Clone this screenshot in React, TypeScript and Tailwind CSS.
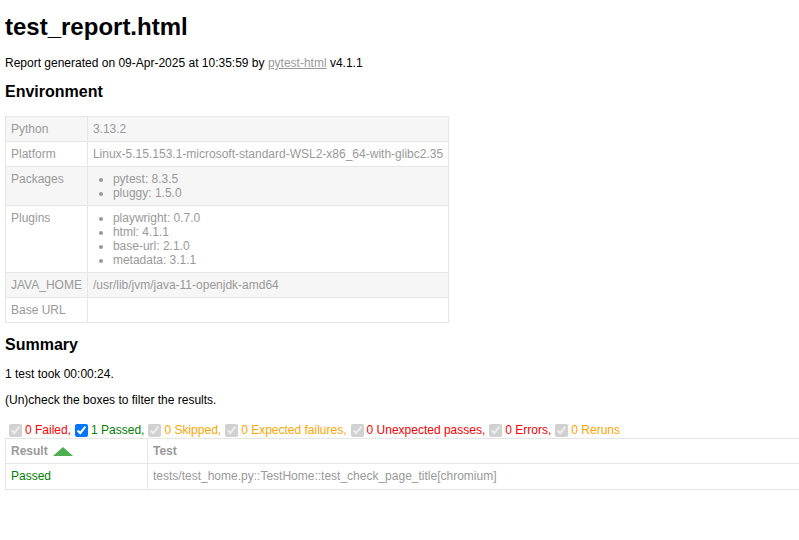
import React from 'react'

const envRows: { key: string; value: string | string[] }[] = [
  { key: 'Python', value: '3.13.2' },
  { key: 'Platform', value: 'Linux-5.15.153.1-microsoft-standard-WSL2-x86_64-with-glibc2.35' },
  { key: 'Packages', value: ['pytest: 8.3.5', 'pluggy: 1.5.0'] },
  { key: 'Plugins', value: ['playwright: 0.7.0', 'html: 4.1.1', 'base-url: 2.1.0', 'metadata: 3.1.1'] },
  { key: 'JAVA_HOME', value: '/usr/lib/jvm/java-11-openjdk-amd64' },
  { key: 'Base URL', value: '' },
]

const filters: { label: string; color: string; checked: boolean; disabled: boolean }[] = [
  { label: '0 Failed', color: 'text-[#ff0000]', checked: true, disabled: true },
  { label: '1 Passed', color: 'text-[#008000]', checked: true, disabled: false },
  { label: '0 Skipped', color: 'text-[#ffa500]', checked: true, disabled: true },
  { label: '0 Expected failures', color: 'text-[#ffa500]', checked: true, disabled: true },
  { label: '0 Unexpected passes', color: 'text-[#ff0000]', checked: true, disabled: true },
  { label: '0 Errors', color: 'text-[#ff0000]', checked: true, disabled: true },
  { label: '0 Reruns', color: 'text-[#ffa500]', checked: true, disabled: true },
]

export default function App() {
  return (
    <div className="w-[799px] h-[540px] overflow-hidden bg-white px-[5px] font-['Liberation_Sans',Arial,sans-serif] text-[12px] text-[#999]">
      <h1 className="mt-[13px] text-[24px] leading-[28px] font-bold text-black">test_report.html</h1>
      <p className="mt-[15px] leading-[14px] text-black">
        Report generated on 09-Apr-2025 at 10:35:59 by{' '}
        <a href="#" className="text-[#999] underline">pytest-html</a> v4.1.1
      </p>

      <h2 className="mt-[13px] text-[16px] leading-[18px] font-bold text-black">Environment</h2>
      <table className="mt-[15px] border-collapse">
        <tbody>
          {envRows.map((row, i) => (
            <tr key={row.key} className={i % 2 === 0 ? 'bg-[#f6f6f6]' : ''}>
              <td className="border border-[#e6e6e6] p-[5px] align-top leading-[14px]">{row.key}</td>
              <td className="border border-[#e6e6e6] p-[5px] align-top leading-[14px]">
                {Array.isArray(row.value) ? (
                  <ul className="list-disc px-[20px]">
                    {row.value.map((v) => (
                      <li key={v}>{v}</li>
                    ))}
                  </ul>
                ) : (
                  row.value
                )}
              </td>
            </tr>
          ))}
        </tbody>
      </table>

      <h2 className="mt-[13px] text-[16px] leading-[18px] font-bold text-black">Summary</h2>
      <p className="mt-[13px] leading-[14px] text-black">1 test took 00:00:24.</p>
      <p className="mt-[12px] leading-[14px] text-black">(Un)check the boxes to filter the results.</p>

      <div className="mt-[15px] flex h-[16px] items-center whitespace-nowrap">
        {filters.map((f, i) => (
          <React.Fragment key={f.label}>
            <input
              type="checkbox"
              defaultChecked={f.checked}
              disabled={f.disabled}
              className="ml-[4px] mr-[3px]"
            />
            <span className={f.color}>
              {f.label}
              {i < filters.length - 1 ? ',' : ''}
            </span>
          </React.Fragment>
        ))}
      </div>

      <table className="w-[800px] border-collapse border border-[#e6e6e6]">
        <thead>
          <tr>
            <th className="w-[142px] border border-[#e6e6e6] p-[5px] text-left font-bold leading-[14px]">
              <span className="inline-flex items-center gap-[5px]">
                Result
                <span className="inline-block h-0 w-0 border-x-[10px] border-b-[9px] border-x-transparent border-b-[#4caf50]" />
              </span>
            </th>
            <th className="border border-[#e6e6e6] p-[5px] text-left font-bold leading-[14px]">Test</th>
          </tr>
        </thead>
        <tbody>
          <tr>
            <td className="border border-[#e6e6e6] p-[5px] leading-[15px] text-[#008000]">Passed</td>
            <td className="border border-[#e6e6e6] p-[5px] leading-[15px]">tests/test_home.py::TestHome::test_check_page_title[chromium]</td>
          </tr>
        </tbody>
      </table>
    </div>
  )
}
